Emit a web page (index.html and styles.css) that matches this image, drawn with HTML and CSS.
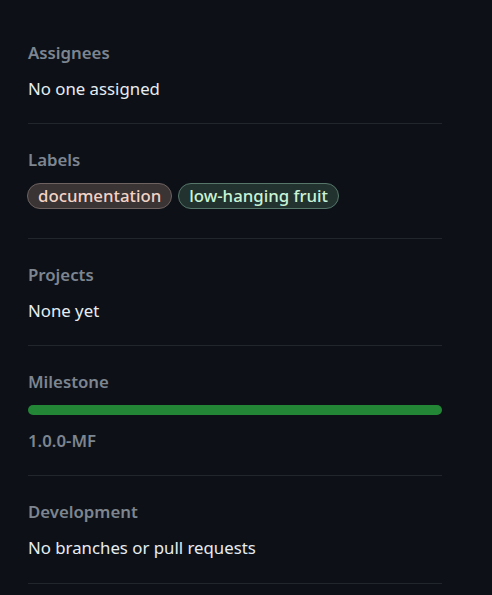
FILE: index.html
```html
<!DOCTYPE html>
<html lang="en">
<head>
    <meta charset="UTF-8">
    <meta name="viewport" content="width=device-width, initial-scale=1.0">
    <title>Issue sidebar</title>
    <link rel="stylesheet" href="styles.css">
</head>
<body>

    <div class="sidebar">
        <div class="item first">
            <h3 class="item-title">Assignees</h3>
            <p class="item-text">No one assigned</p>
        </div>

        <div class="item">
            <h3 class="item-title">Labels</h3>
            <div class="labels">
                <span class="label label-docs">documentation</span>
                <span class="label label-easy">low-hanging fruit</span>
            </div>
        </div>

        <div class="item">
            <h3 class="item-title">Projects</h3>
            <p class="item-text">None yet</p>
        </div>

        <div class="item">
            <h3 class="item-title">Milestone</h3>
            <div class="progress"><div class="progress-bar" style="width: 100%"></div></div>
            <a class="milestone-link" href="#">1.0.0-MF</a>
        </div>

        <div class="item last">
            <h3 class="item-title">Development</h3>
            <p class="item-text">No branches or pull requests</p>
        </div>
    </div>

</body>
</html>
```

FILE: styles.css
```css
body {
    margin: 0;
    background-color: #0d1117;
    color: #e6edf3;
    font-family: "Noto Sans", "DejaVu Sans", sans-serif;
    font-size: 16.8px;
}
.sidebar {
    width: 414px;
    margin-left: 28px;
}
.item {
    padding: 25px 0 24px;
    border-bottom: 1px solid #21262d;
}
.item.first {
    padding-top: 42px;
}
.item.last {
    padding-bottom: 25px;
}
.item-title {
    margin: 0;
    font-size: 16.8px;
    line-height: 21px;
    font-weight: 600;
    color: #7d8590;
}
.item-text {
    margin: 15px 0 0;
    line-height: 21px;
}
.labels {
    display: flex;
    gap: 6px;
    margin: 13px 0 5px -1px;
}
.label {
    display: inline-block;
    padding: 0 10px;
    line-height: 24px;
    border-radius: 13px;
    border: 1px solid;
    font-weight: 500;
}
.label-docs {
    background-color: #3a3435;
    border-color: #6d6260;
    color: #f3d3c4;
}
.label-easy {
    background-color: #22332f;
    border-color: #56766a;
    color: #c9f3d6;
}
.progress {
    margin-top: 13px;
    height: 10px;
    border-radius: 6px;
    background-color: #21262d;
    overflow: hidden;
}
.progress-bar {
    height: 100%;
    background-color: #238636;
}
.milestone-link {
    display: block;
    margin-top: 15px;
    line-height: 21px;
    font-weight: 600;
    color: #7d8590;
    text-decoration: none;
}
```
